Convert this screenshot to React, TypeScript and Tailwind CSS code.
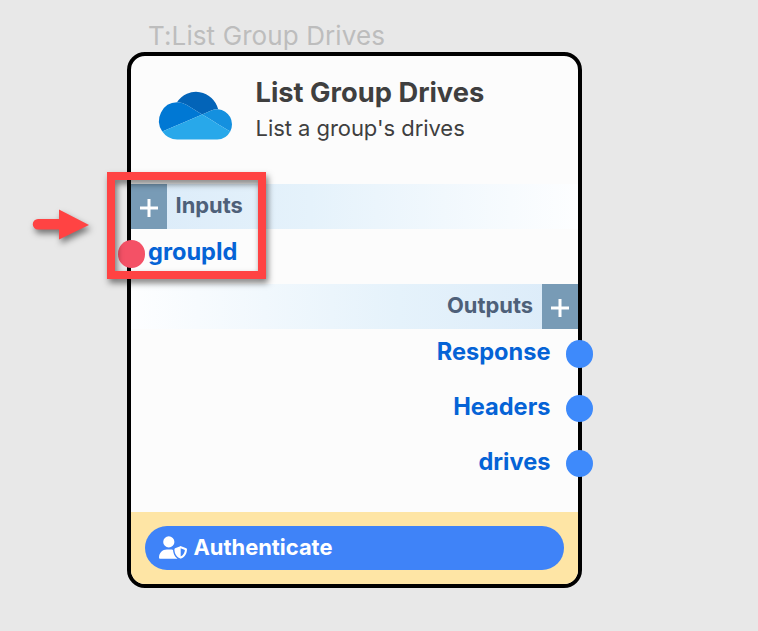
import React from "react";
import { FaUserShield } from "react-icons/fa6";

function CloudLogo() {
  return (
    <svg viewBox="0 6 32 20" className="block h-[46.5px] w-[73px] overflow-visible" preserveAspectRatio="none">
      <path fill="#0364b8" d="M12.20245,11.19292l.00031-.0011,6.71765,4.02379,4.00293-1.68451.00018.00068A6.4768,6.4768,0,0,1,25.5,13c.14764,0,.29358.0067.43878.01639a10.00075,10.00075,0,0,0-18.041-3.01381C7.932,10.00215,7.9657,10,8,10A7.96073,7.96073,0,0,1,12.20245,11.19292Z" />
      <path fill="#0078d4" d="M12.20276,11.19182l-.00031.0011A7.96073,7.96073,0,0,0,8,10c-.0343,0-.06805.00215-.10223.00258A7.99676,7.99676,0,0,0,1.43732,22.57277l5.924-2.49292,2.63342-1.10819,5.86353-2.46746,3.06213-1.28859Z" />
      <path fill="#1490df" d="M25.93878,13.01639C25.79358,13.0067,25.64764,13,25.5,13a6.4768,6.4768,0,0,0-2.57648.53178l-.00018-.00068-4.00293,1.68451,1.16077.69528L23.88611,18.19l1.66009.99438,5.67633,3.40007a6.5002,6.5002,0,0,0-5.28375-9.56805Z" />
      <path fill="#28a8ea" d="M25.5462,19.18437,23.88611,18.19l-3.80493-2.2791-1.16077-.69528L15.85828,16.5042,9.99475,18.97166,7.36133,20.07985l-5.924,2.49292A7.98889,7.98889,0,0,0,8,26H25.5a6.49837,6.49837,0,0,0,5.72253-3.41556Z" />
    </svg>
  );
}

function AddButton() {
  return (
    <button className="flex h-full w-9 shrink-0 items-center justify-center bg-[#789bb6]">
      <svg viewBox="0 0 18 18" className="mt-[3px] -ml-[1px] block h-[18px] w-[18px]">
        <path d="M9 0v18M0 9h18" stroke="#fff" strokeWidth="3" />
      </svg>
    </button>
  );
}

function OutputPort({ label }: { label: string }) {
  return (
    <div className="flex h-[54.8px] items-start justify-end">
      <span className="mt-[5px] mr-[15px] text-[23.6px] leading-[36px] font-bold text-[#0563d6]">{label}</span>
      <span className="mt-[11px] -mr-[15px] h-[27.5px] w-[27.5px] shrink-0 rounded-full bg-[#3e8afb]" />
    </div>
  );
}

export default function App() {
  return (
    <main className="relative h-[631px] w-[758px] overflow-hidden bg-[#e8e8e8] pl-[127px] font-['Inter',sans-serif]">
      <div className="h-[52px] pt-[18px] pl-[21px] text-[26px] leading-[36px] tracking-[0.1px] whitespace-nowrap text-[#bdbdbd]">T:List Group Drives</div>
      <section className="flex h-[536px] w-[455px] flex-col rounded-[18px] border-4 border-black bg-[#fcfcfc]">
        <header className="flex h-[128px] shrink-0 pl-[28px]">
          <div className="mt-[36.5px]">
            <CloudLogo />
          </div>
          <div className="ml-[23.5px] pt-[18px] whitespace-nowrap text-[#3f3f3f]">
            <h1 className="mt-[1px] text-[27.3px] leading-[36px] font-bold">List Group Drives</h1>
            <p className="-mt-[1px] text-[22px] leading-[36px] tracking-[-0.05px]">List a group's drives</p>
          </div>
        </header>
        <div className="flex h-[45px] shrink-0 bg-linear-to-r from-[#dbebf9] via-[#e5f2fb] via-40% to-[#fdfeff]">
          <AddButton />
          <span className="mt-[3px] ml-[8.5px] text-[21.9px] leading-[36px] font-bold text-[#4e6079]">Inputs</span>
        </div>
        <div className="flex h-[55px] shrink-0 items-start">
          <span className="mt-[11px] -ml-[13.5px] h-[27.5px] w-[27.5px] rounded-full bg-[#f45166]" />
          <span className="mt-[5px] ml-[3px] text-[23.6px] leading-[36px] font-bold text-[#0563d6]">groupId</span>
        </div>
        <div className="flex h-[45px] shrink-0 justify-end bg-linear-to-l from-[#dbebf9] via-[#e5f2fb] via-40% to-[#fdfeff]">
          <span className="mt-[3px] mr-[9px] text-[21.9px] leading-[36px] font-bold text-[#4e6079]">Outputs</span>
          <AddButton />
        </div>
        <div className="flex flex-1 flex-col">
          <OutputPort label="Response" />
          <OutputPort label="Headers" />
          <OutputPort label="drives" />
        </div>
        <footer className="h-[72.5px] shrink-0 rounded-b-[14px] bg-[#fee5a5] px-[14px] pt-[14.5px]">
          <button className="flex h-[44px] w-full items-center rounded-full bg-[#3f83f8] pl-[14px] text-white">
            <FaUserShield className="-mt-[2px] h-[23px] w-[28px]" />
            <span className="-mt-[2px] ml-[6.5px] text-[21.9px] leading-[36px] font-bold">Authenticate</span>
          </button>
        </footer>
      </section>

      <div className="absolute top-[172px] left-[107px] h-[107px] w-[159px] drop-shadow-[2px_4px_3px_rgba(0,0,0,0.5)]">
        <div className="h-full w-full border-8 border-[#ff4343]" />
      </div>
      <svg viewBox="0 0 70 50" className="absolute top-[200px] left-[27px] h-[50px] w-[70px] overflow-visible drop-shadow-[2px_4px_3px_rgba(0,0,0,0.5)]">
        <path fill="#ff4343" d="M11 19H32V9.500L62 25L32 39.500V29.500H11A5.250 5.250 0 0 1 11 19Z" />
      </svg>
    </main>
  );
}
